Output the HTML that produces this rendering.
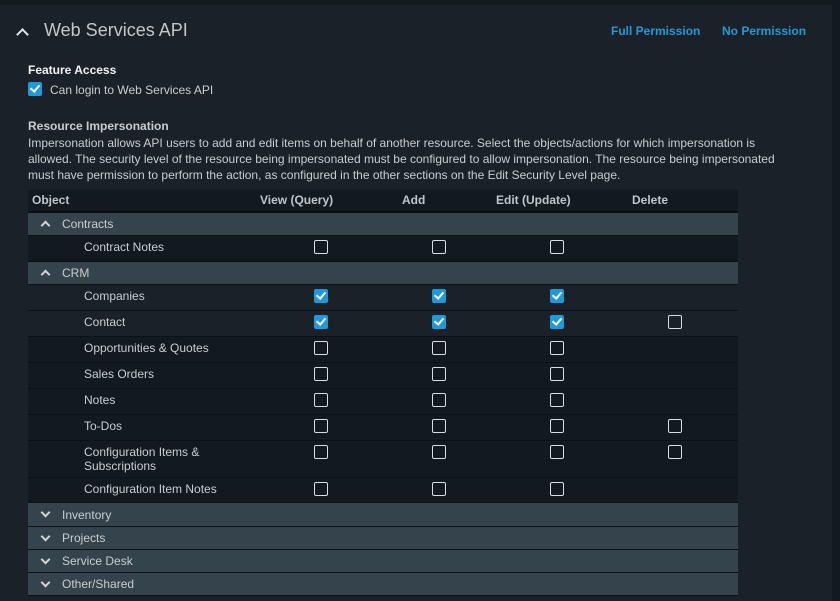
<!DOCTYPE html><html><head><style>
*{margin:0;padding:0;box-sizing:border-box}
body{width:840px;height:601px;background:#121a1f;font-family:"Liberation Sans",sans-serif;overflow:hidden;position:relative}
.panel{position:absolute;left:0;top:5px;width:832px;height:596px;background:#1b2129}
.a{position:absolute;white-space:nowrap}
.cb{position:absolute;width:14px;height:14px;border:1.5px solid #d8dde0;border-radius:2px}
.cb.on{background:#1f9ad8;border-color:#1f9ad8}
.cb.on:after{content:"";position:absolute;left:3px;top:0px;width:4px;height:7px;border:solid #fff;border-width:0 2px 2px 0;transform:rotate(40deg)}
.row{position:absolute;left:28px;width:710px;border-bottom:1px solid #0c1115}
.cat{background:#35434c}
.item{background:#131a1f}
.item2{background:#1a2128}
.t{position:absolute;font-size:12px;color:#c9cdd0}
.ch{position:absolute;left:14px;width:7px;height:7px;border:solid #d0d4d6;border-width:2px 0 0 2px}
</style></head><body>
<div class="panel"></div>
<div class="a" style="left:18px;top:27px;width:9px;height:9px;border:solid #e0e3e5;border-width:2px 0 0 2px;transform:rotate(45deg);top:30px"></div>
<div class="a" style="left:44px;top:20px;font-size:18px;color:#c3c7ca">Web Services API</div>
<div class="a" style="left:611px;top:24px;font-size:12px;font-weight:bold;color:#2199d6">Full Permission</div>
<div class="a" style="left:722px;top:24px;font-size:12px;font-weight:bold;color:#2199d6">No Permission</div>
<div class="a" style="left:28px;top:63px;font-size:12px;font-weight:bold;color:#f0f2f3">Feature Access</div>
<div class="cb on" style="left:28px;top:82px"></div>
<div class="a" style="left:50px;top:83px;font-size:12px;color:#c9cdd0">Can login to Web Services API</div>
<div class="a" style="left:28px;top:119px;font-size:12px;font-weight:bold;color:#c9cdd0">Resource Impersonation</div>
<div class="a" style="left:28px;top:135px;font-size:12px;line-height:16px;color:#c9cdd0;white-space:normal;width:750px">Impersonation allows API users to add and edit items on behalf of another resource. Select the objects/actions for which impersonation is allowed. The security level of the resource being impersonated must be configured to allow impersonation. The resource being impersonated must have permission to perform the action, as configured in the other sections on the Edit Security Level page.</div>
<div class="row" style="top:190px;height:23px;background:#121a1f;border-bottom:2px solid #0a0e11"></div>
<div class="a" style="left:32px;top:193px;font-size:12px;font-weight:bold;color:#c0c5c8">Object</div>
<div class="a" style="left:260px;top:193px;font-size:12px;font-weight:bold;color:#c0c5c8">View (Query)</div>
<div class="a" style="left:402px;top:193px;font-size:12px;font-weight:bold;color:#c0c5c8">Add</div>
<div class="a" style="left:496px;top:193px;font-size:12px;font-weight:bold;color:#c0c5c8">Edit (Update)</div>
<div class="a" style="left:632px;top:193px;font-size:12px;font-weight:bold;color:#c0c5c8">Delete</div>

<div class="row cat" style="top:213px;height:23px"><div class="ch" style="top:9px;transform:rotate(45deg)"></div><div class="t" style="left:34px;top:4px">Contracts</div></div>
<div class="row item" style="top:236px;height:26px"><div class="t" style="left:56px;top:4px">Contract Notes</div></div>
<div class="row cat" style="top:262px;height:23px"><div class="ch" style="top:9px;transform:rotate(45deg)"></div><div class="t" style="left:34px;top:4px">CRM</div></div>
<div class="row item2" style="top:285px;height:26px"><div class="t" style="left:56px;top:4px">Companies</div></div>
<div class="row item2" style="top:311px;height:26px"><div class="t" style="left:56px;top:4px">Contact</div></div>
<div class="row item" style="top:337px;height:26px"><div class="t" style="left:56px;top:4px">Opportunities &amp; Quotes</div></div>
<div class="row item" style="top:363px;height:26px"><div class="t" style="left:56px;top:4px">Sales Orders</div></div>
<div class="row item" style="top:389px;height:26px"><div class="t" style="left:56px;top:4px">Notes</div></div>
<div class="row item" style="top:415px;height:26px"><div class="t" style="left:56px;top:4px">To-Dos</div></div>
<div class="row item" style="top:441px;height:37px"><div class="t" style="left:56px;top:4px;line-height:14px">Configuration Items &amp;<br>Subscriptions</div></div>
<div class="row item" style="top:478px;height:25px"><div class="t" style="left:56px;top:4px">Configuration Item Notes</div></div>
<div class="row cat" style="top:503px;height:24px"><div class="ch" style="top:6px;transform:rotate(225deg)"></div><div class="t" style="left:34px;top:5px">Inventory</div></div>
<div class="row cat" style="top:527px;height:23px"><div class="ch" style="top:6px;transform:rotate(225deg)"></div><div class="t" style="left:34px;top:4px">Projects</div></div>
<div class="row cat" style="top:550px;height:23px"><div class="ch" style="top:6px;transform:rotate(225deg)"></div><div class="t" style="left:34px;top:4px">Service Desk</div></div>
<div class="row cat" style="top:573px;height:23px"><div class="ch" style="top:6px;transform:rotate(225deg)"></div><div class="t" style="left:34px;top:4px">Other/Shared</div></div>

<div class="cb" style="left:314px;top:240px"></div><div class="cb" style="left:432px;top:240px"></div><div class="cb" style="left:550px;top:240px"></div>
<div class="cb on" style="left:314px;top:289px"></div><div class="cb on" style="left:432px;top:289px"></div><div class="cb on" style="left:550px;top:289px"></div>
<div class="cb on" style="left:314px;top:315px"></div><div class="cb on" style="left:432px;top:315px"></div><div class="cb on" style="left:550px;top:315px"></div><div class="cb" style="left:668px;top:315px"></div>
<div class="cb" style="left:314px;top:341px"></div><div class="cb" style="left:432px;top:341px"></div><div class="cb" style="left:550px;top:341px"></div>
<div class="cb" style="left:314px;top:367px"></div><div class="cb" style="left:432px;top:367px"></div><div class="cb" style="left:550px;top:367px"></div>
<div class="cb" style="left:314px;top:393px"></div><div class="cb" style="left:432px;top:393px"></div><div class="cb" style="left:550px;top:393px"></div>
<div class="cb" style="left:314px;top:419px"></div><div class="cb" style="left:432px;top:419px"></div><div class="cb" style="left:550px;top:419px"></div><div class="cb" style="left:668px;top:419px"></div>
<div class="cb" style="left:314px;top:445px"></div><div class="cb" style="left:432px;top:445px"></div><div class="cb" style="left:550px;top:445px"></div><div class="cb" style="left:668px;top:445px"></div>
<div class="cb" style="left:314px;top:482px"></div><div class="cb" style="left:432px;top:482px"></div><div class="cb" style="left:550px;top:482px"></div>
</body></html>
